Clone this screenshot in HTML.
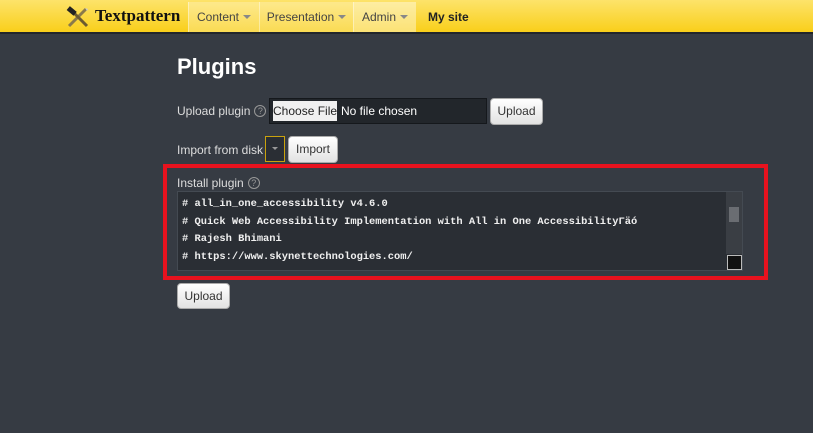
<!DOCTYPE html>
<html><head><style>
body{margin:0;width:813px;height:433px;background:#363b43;font-family:"Liberation Sans",sans-serif;overflow:hidden;position:relative;color:#e8e8e8}
.hdr{position:absolute;left:0;top:0;width:813px;height:32px;background:linear-gradient(#fde36a,#f9cf1a);border-bottom:2px solid #22262b}
.logo{position:absolute;left:95px;top:6px;font-family:"Liberation Serif",serif;font-weight:bold;font-size:17px;color:#111}
.nav{position:absolute;top:2px;height:30px;line-height:30px;font-size:12px;color:#444;text-align:center;background:rgba(255,255,255,.25);border-left:1px solid rgba(255,255,255,.4);white-space:nowrap}
.nav .c{display:inline-block;border:4px solid transparent;border-top:4px solid #888;vertical-align:middle;margin-left:4px;margin-top:3px}
h1{position:absolute;left:177px;top:54px;margin:0;font-size:22px;font-weight:bold;color:#fff}
.lbl{position:absolute;font-size:12px;color:#ddd;white-space:nowrap}
.q{display:inline-block;width:10px;height:10px;border:1px solid #999;border-radius:50%;font-size:9px;line-height:10px;text-align:center;color:#999;margin-left:4px;vertical-align:1px}
.btn{position:absolute;background:linear-gradient(#fff,#e2e2e2);border:1px solid #aaa;border-radius:4px;color:#333;font-size:12px;text-align:center;box-sizing:border-box;white-space:nowrap}
pre{margin:0;font-family:"Liberation Mono",monospace;font-weight:bold;font-size:10.4px;line-height:17.7px;color:#f0f0f0}
</style></head><body>
<div class="hdr"></div>
<svg style="position:absolute;left:66px;top:6px" width="24" height="22" viewBox="0 0 24 22"><path d="M3 20 L20 3" stroke="#8a7a4a" stroke-width="3"/><path d="M21 20 L8 7" stroke="#6b5a30" stroke-width="3"/><rect x="1" y="2" width="9" height="5" transform="rotate(40 5 5)" fill="#222"/><path d="M19 2 l3 1 -1 2z" fill="#ccc"/></svg>
<div class="logo">Textpattern</div>
<div class="nav" style="left:188px;width:70px">Content<span class="c"></span></div>
<div class="nav" style="left:259px;width:93px">Presentation<span class="c"></span></div>
<div class="nav" style="left:353px;width:62px;background:rgba(255,255,255,.4)">Admin<span class="c"></span></div>
<div style="position:absolute;left:428px;top:2px;line-height:30px;font-size:12px;font-weight:bold;color:#222">My site</div>
<h1>Plugins</h1>
<div class="lbl" style="left:177px;top:104px">Upload plugin<span class="q">?</span></div>
<div style="position:absolute;left:269px;top:98px;width:218px;height:26px;background:#22262b;border:1px solid #15181c;box-sizing:border-box"></div>
<div style="position:absolute;left:273px;top:101px;width:64px;height:20px;background:#f0f0f0;color:#222;font-size:12px;line-height:20px;text-align:center;white-space:nowrap;overflow:hidden">Choose File</div>
<div class="lbl" style="left:341px;top:104px;color:#fff">No file chosen</div>
<div class="btn" style="left:490px;top:98px;width:53px;height:27px;line-height:25px">Upload</div>
<div class="lbl" style="left:177px;top:143px">Import from disk</div>
<div style="position:absolute;left:265px;top:136px;width:20px;height:26px;border:1px solid #c9a20e;box-sizing:border-box;background:#2a2e34"><div style="position:absolute;left:6px;top:10px;border:3px solid transparent;border-top:3px solid #999"></div></div>
<div class="btn" style="left:288px;top:136px;width:50px;height:27px;line-height:25px">Import</div>
<div style="position:absolute;left:163px;top:164px;width:605px;height:116px;border:4px solid #e8121e;box-sizing:border-box"></div>
<div class="lbl" style="left:177px;top:176px">Install plugin<span class="q">?</span></div>
<div style="position:absolute;left:177px;top:191px;width:566px;height:80px;background:#2a2e34;border:1px solid #444a52;box-sizing:border-box">
<pre style="position:absolute;left:4px;top:4px"># all_in_one_accessibility v4.6.0
# Quick Web Accessibility Implementation with All in One AccessibilityΓäó
# Rajesh Bhimani
# https://www.skynettechnologies.com/</pre>
<div style="position:absolute;right:0;top:0;width:16px;height:62px;background:#3a3e44"><div style="position:absolute;left:3px;top:15px;width:10px;height:15px;background:#6a6d72"></div></div>
<div style="position:absolute;right:0;bottom:0;width:15px;height:15px;background:#111;border:1px solid #bbb;box-sizing:border-box"></div>
</div>
<div class="btn" style="left:177px;top:283px;width:53px;height:26px;line-height:24px">Upload</div>
</body></html>
